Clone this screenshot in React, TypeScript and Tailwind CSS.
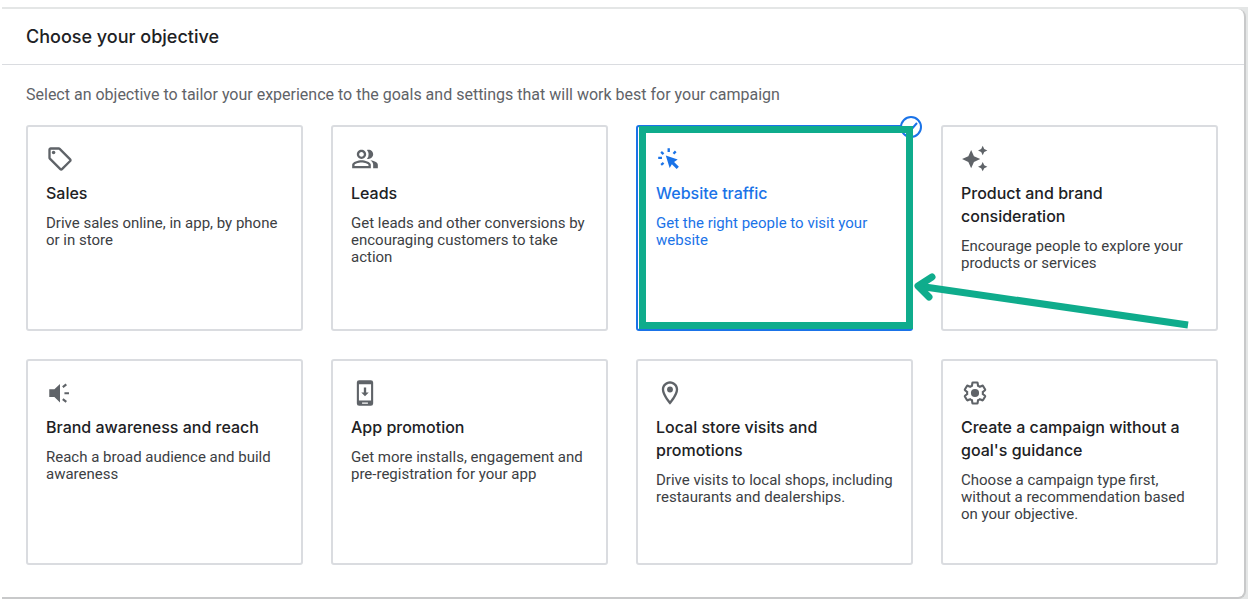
import type { ReactNode } from "react";
import { useState } from "react";
import { MdOutlineLocalOffer, MdOutlineLocationOn, MdOutlinePeopleAlt } from "react-icons/md";

type Objective = {
  id: string;
  title: string;
  description: string;
  icon: ReactNode;
};

function ClickIcon() {
  return (
    <svg viewBox="0 0 24 24" className="size-7" fill="none" stroke="currentColor" strokeWidth="2" aria-hidden="true">
      <path d="M10.9 2.8V6M1.9 11.1h3.2M4.4 5.9l2 1.9M15 7.5l1.9-2M4.4 17.1l2.1-1.7" />
      <path d="M8.4 9l10.2 3.4-3.1 2.1 4.1 4.1-1.9 1.9-4.1-4.1-1.9 3.3z" fill="currentColor" stroke="none" />
    </svg>
  );
}

function SparkleIcon() {
  return (
    <svg viewBox="0 0 24 24" className="size-7" fill="currentColor" aria-hidden="true">
      <path d="M8.7 4.3l2.4 5.4 5.4 2.4-5.4 2.4-2.4 5.4-2.4-5.4-5.4-2.4 5.4-2.4z" />
      <path d="M18.6 0.7l1.3 2.7 2.7 1.3-2.7 1.3-1.3 2.7-1.3-2.7-2.7-1.3 2.7-1.3z" />
      <path d="M18.6 14.6l1.3 2.7 2.7 1.3-2.7 1.3-1.3 2.7-1.3-2.7-2.7-1.3 2.7-1.3z" />
    </svg>
  );
}

function SpeakerIcon() {
  return (
    <svg viewBox="0 0 24 24" className="size-7" fill="none" stroke="currentColor" strokeWidth="1.9" aria-hidden="true">
      <path d="M2.8 8.8h4.4L12 4.2v15.9l-4.8-4.6H2.8z" fill="currentColor" stroke="none" />
      <path d="M14.4 7l3-2.3M15.8 12.2h3.9M14.4 17.3l3 2.3" />
    </svg>
  );
}

function PhoneIcon() {
  return (
    <svg viewBox="0 0 24 24" className="size-7" fill="currentColor" aria-hidden="true">
      <path
        fillRule="evenodd"
        d="M7 1h10a2 2 0 0 1 2 2v18a2 2 0 0 1-2 2H7a2 2 0 0 1-2-2V3a2 2 0 0 1 2-2zM6.8 4.4v14h10.4v-14zM9.5 20.2v1h5v-1z"
      />
      <path d="M11 7.2h2v4.4h2.2L12 14.8l-3.200-3.200H11z" />
    </svg>
  );
}

function GearIcon() {
  return (
    <svg viewBox="0 0 24 24" className="size-7" aria-hidden="true">
      <path
        d="M19.43 12.98c.04-.32.07-.64.07-.98s-.03-.66-.07-.98l2.11-1.65c.19-.15.24-.42.12-.64l-2-3.46c-.09-.16-.26-.25-.44-.25l-2.66 1.03c-.52-.4-1.08-.73-1.69-.98l-.38-2.65C14.46 2.18 14.25 2 14 2h-4c-.25 0-.46.18-.49.42l-.38 2.65c-.61.25-1.17.59-1.69.98l-2.67-1.03c-.17 0-.34.09-.43.25l-2 3.46c-.13.22-.07.49.12.64l2.11 1.65c-.04.32-.07.65-.07.98s.03.66.07.98l-2.11 1.65c-.19.15-.24.42-.12.64l2 3.46c.09.16.26.25.44.25l2.66-1.03c.52.4 1.08.73 1.69.98l.38 2.65c.03.24.24.42.49.42h4c.25 0 .46-.18.49-.42l.38-2.65c.61-.25 1.17-.59 1.69-.98l2.67 1.03c.17 0 .34-.09.43-.25l2-3.46c.12-.22.07-.49-.12-.64z"
        transform="translate(1.2 1.2) scale(.9)"
        fill="none"
        stroke="currentColor"
        strokeWidth="2"
      />
      <circle cx="12" cy="12" r="3.5" fill="currentColor" />
    </svg>
  );
}

const objectives: Objective[] = [
  {
    id: "sales",
    title: "Sales",
    description: "Drive sales online, in app, by phone or in store",
    icon: <MdOutlineLocalOffer className="size-7" aria-hidden="true" />,
  },
  {
    id: "leads",
    title: "Leads",
    description: "Get leads and other conversions by encouraging customers to take action",
    icon: <MdOutlinePeopleAlt className="size-7" aria-hidden="true" />,
  },
  {
    id: "traffic",
    title: "Website traffic",
    description: "Get the right people to visit your website",
    icon: <ClickIcon />,
  },
  {
    id: "consideration",
    title: "Product and brand consideration",
    description: "Encourage people to explore your products or services",
    icon: <SparkleIcon />,
  },
  {
    id: "awareness",
    title: "Brand awareness and reach",
    description: "Reach a broad audience and build awareness",
    icon: <SpeakerIcon />,
  },
  {
    id: "app",
    title: "App promotion",
    description: "Get more installs, engagement and pre-registration for your app",
    icon: <PhoneIcon />,
  },
  {
    id: "local",
    title: "Local store visits and promotions",
    description: "Drive visits to local shops, including restaurants and dealerships.",
    icon: <MdOutlineLocationOn className="size-7" aria-hidden="true" />,
  },
  {
    id: "none",
    title: "Create a campaign without a goal's guidance",
    description: "Choose a campaign type first, without a recommendation based on your objective.",
    icon: <GearIcon />,
  },
];

// Green box and arrow that point out the recommended objective
function Callout() {
  return (
    <div
      className="pointer-events-none absolute -top-px -right-0.5 bottom-0 left-px z-10 border-[7px] border-[#0fac8c]"
      aria-hidden="true"
    >
      <svg
        viewBox="0 0 280 60"
        className="absolute top-[136px] left-full ml-[7px] h-[60px] w-[280px]"
        fill="none"
        stroke="#0fac8c"
        strokeWidth="7"
      >
        <path d="M5 17L275 56" />
        <path d="M19 8L5 17L16 28" strokeLinecap="round" strokeLinejoin="round" />
      </svg>
    </div>
  );
}

function ObjectiveCard({
  objective,
  selected,
  onSelect,
}: {
  objective: Objective;
  selected: boolean;
  onSelect: () => void;
}) {
  return (
    <button
      type="button"
      aria-pressed={selected}
      onClick={onSelect}
      className={`relative flex min-h-[206px] flex-col items-start rounded-[3px] border-2 p-[18px] text-left ${
        selected ? "border-[#1a73e8] text-[#1a73e8]" : "border-[#dadce0] text-[#3c4043]"
      }`}
    >
      <span className={selected ? "text-[#1a73e8]" : "text-[#5f6368]"}>{objective.icon}</span>
      <span
        className={`mt-[9px] font-[Inter,sans-serif] text-base leading-[23px] font-medium ${
          selected ? "text-[#1a73e8]" : "text-[#202124]"
        }`}
      >
        {objective.title}
      </span>
      <span className="mt-2.5 font-[Roboto,sans-serif] text-[15px] leading-[17px]">{objective.description}</span>
      {selected && (
        <svg
          viewBox="0 0 24 24"
          className="absolute -top-3 -right-3 size-6"
          fill="white"
          stroke="#1a73e8"
          strokeWidth="2"
          aria-hidden="true"
        >
          <circle cx="12" cy="12" r="10" />
          <path d="M7 12l4 4 7-8" fill="none" />
        </svg>
      )}
      {objective.id === "traffic" && <Callout />}
    </button>
  );
}

export default function App() {
  const [selected, setSelected] = useState("traffic");
  return (
    <main className="bg-white px-0.5 pt-[7px] font-[Roboto,sans-serif]">
      <div className="bg-[#e4e6e6] pt-0.5 pr-0.5">
        <section className="rounded-r-lg border-r-2 border-b-2 border-[#c8c9ca] bg-white">
          <header className="border-b border-[#dadce0] px-6 py-[14px]">
            <h1 className="font-[Inter,sans-serif] text-lg leading-[27px] font-medium text-[#202124]">
              Choose your objective
            </h1>
          </header>
          <div className="pt-5 pr-[26px] pb-8 pl-6">
            <p className="text-base leading-5 text-[#5f6368]">
              Select an objective to tailor your experience to the goals and settings that will work best for your
              campaign
            </p>
            <div className="mt-5 grid grid-cols-4 gap-7">
              {objectives.map((objective) => (
                <ObjectiveCard
                  key={objective.id}
                  objective={objective}
                  selected={selected === objective.id}
                  onSelect={() => setSelected(objective.id)}
                />
              ))}
            </div>
          </div>
        </section>
      </div>
    </main>
  );
}
